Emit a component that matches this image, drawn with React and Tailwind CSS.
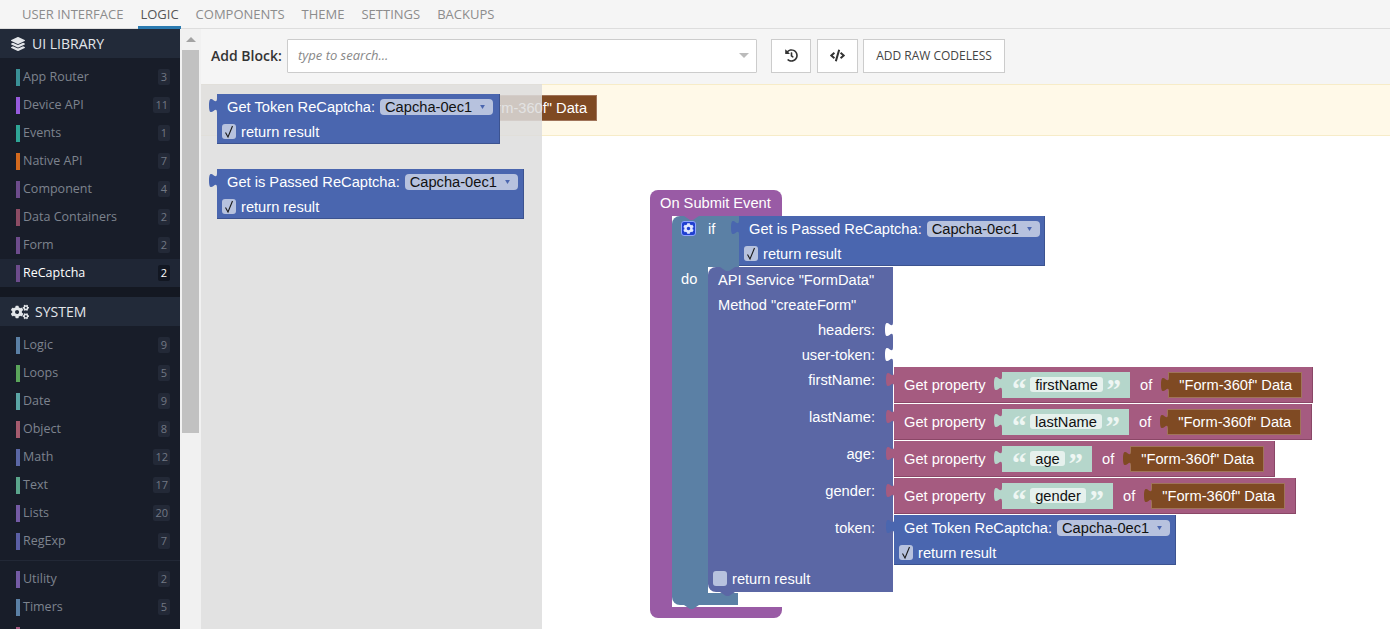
import React from "react";
import { FaLayerGroup, FaCogs, FaHistory, FaCode, FaCog } from "react-icons/fa";

const tabs = ["USER INTERFACE", "LOGIC", "COMPONENTS", "THEME", "SETTINGS", "BACKUPS"];

const library = [
  { name: "App Router", count: 3, bar: "bg-[#3a9096]" },
  { name: "Device API", count: 11, bar: "bg-[#965bdc]" },
  { name: "Events", count: 1, bar: "bg-[#2fa596]" },
  { name: "Native API", count: 7, bar: "bg-[#d2691e]" },
  { name: "Component", count: 4, bar: "bg-[#6d4c8c]" },
  { name: "Data Containers", count: 2, bar: "bg-[#8c4c64]" },
  { name: "Form", count: 2, bar: "bg-[#6d4c8c]" },
];

const system = [
  { name: "Logic", count: 9, bar: "bg-[#5b80a5]" },
  { name: "Loops", count: 5, bar: "bg-[#5ba55b]" },
  { name: "Date", count: 9, bar: "bg-[#5ba5a5]" },
  { name: "Object", count: 8, bar: "bg-[#a55b6e]" },
  { name: "Math", count: 12, bar: "bg-[#5b67a5]" },
  { name: "Text", count: 17, bar: "bg-[#5ba58c]" },
  { name: "Lists", count: 20, bar: "bg-[#745ba5]" },
  { name: "RegExp", count: 7, bar: "bg-[#5b5fa5]" },
];

const extras = [
  { name: "Utility", count: 2, bar: "bg-[#745ba5]" },
  { name: "Timers", count: 5, bar: "bg-[#5b80a5]" },
];

const SideRow = ({ name, count, bar, active }) => (
  <div className={`flex h-[28px] items-center pl-[16px] pr-[10px] ${active ? "bg-[#1f2635]" : ""}`}>
    <span className={`h-[17px] w-[4px] shrink-0 ${bar}`} />
    <span className={`ml-[3px] flex-1 text-[12.5px] ${active ? "text-white" : "text-[#7d838e]"}`}>{name}</span>
    <span
      className={`flex h-[16px] min-w-[12px] items-center justify-center rounded-[2px] px-[2px] text-[11px] ${
        active ? "bg-[#121722] text-white" : "bg-[#232937] text-[#727884]"
      }`}
    >
      {count}
    </span>
  </div>
);

const SideHeader = ({ icon, label }) => (
  <div className="flex h-[29px] items-center bg-[#222a39] pl-[11px] text-[14px] text-[#e3e6ea]">
    {icon}
    <span>{label}</span>
  </div>
);

// blockly puzzle tab, sticks out on the left of a block
const Tab = ({ className }) => (
  <svg viewBox="0 0 8 15" className={`absolute left-[-8px] h-[15px] w-[8px] ${className}`}>
    <path d="M8 0c0 10-8-8-8 7.500s8-2.500 8 7.500z" fill="currentColor" />
  </svg>
);

const Check = ({ on = true }) => (
  <span className="flex h-[15px] w-[14px] shrink-0 items-center justify-center rounded-[3px] bg-[#b7c2de]">
    {on && (
      <svg viewBox="0 0 14 15" className="h-[15px] w-[14px]">
        <path d="M3.500 8.500l2.500 4.500 4.500-11" fill="none" stroke="#1a1a1a" strokeWidth="1.100" />
      </svg>
    )}
  </span>
);

const Dropdown = () => (
  <span className="ml-[5px] flex h-[16px] items-center rounded-[4px] bg-[#b7c2de] pl-[5px] pr-[8px] text-[14.67px] text-[#111]">
    Capcha-0ec1
    <svg viewBox="0 0 6 5" className="ml-[8px] h-[4px] w-[5px]">
      <path d="M0 0h6L3 5z" fill="#4a66af" />
    </svg>
  </span>
);

const ReCaptchaBlock = ({ label, className = "" }) => (
  <div className={`relative h-[50px] shrink-0 border-b border-r border-[#3c5390] bg-[#4a66af] text-white ${className}`}>
    <Tab className="top-[4px] text-[#4a66af]" />
    <div className="flex h-[25px] items-center whitespace-nowrap pl-[10px] pr-[6px]">
      {label}
      <Dropdown />
    </div>
    <div className="flex h-[25px] items-center pl-[5px]">
      <Check />
      <span className="ml-[5px]">return result</span>
    </div>
  </div>
);

const FormData = ({ className = "" }) => (
  <div
    className={`relative flex h-[26px] w-[134px] shrink-0 items-center border border-[#a0745a] bg-[#7f4a23] pl-[10px] text-white ${className}`}
  >
    <Tab className="top-[4px] text-[#7f4a23]" />
    "Form-360f" Data
  </div>
);

const Quote = ({ children }) => (
  <span className="mt-[-3px] h-[17px] font-['Liberation_Serif',serif] text-[29px] font-bold leading-[29px] text-[#eef6f3]">
    {children}
  </span>
);

const GetProperty = ({ name, stringWidth, pillWidth }) => (
  <div className="relative flex h-[36px] shrink-0 items-center whitespace-nowrap border-b border-r border-[#8a4767] bg-[#a55b80] pl-[10px] pr-[10px] text-white">
    <Tab className="top-[5px] text-[#a55b80]" />
    <span className="w-[81px]">Get property</span>
    <div className={`relative ml-[17px] flex h-[26px] shrink-0 items-center justify-between bg-[#b5d6cb] pl-[10px] pr-[9px] ${stringWidth}`}>
      <Tab className="top-[4px] text-[#b5d6cb]" />
      <Quote>“</Quote>
      <span className={`flex h-[15px] items-center justify-center rounded-[3px] bg-[#e6f1ed] text-[14.67px] text-[#111] ${pillWidth}`}>
        {name}
      </span>
      <Quote>”</Quote>
    </div>
    <span className="ml-[10px]">of</span>
    <FormData className="ml-[16px]" />
  </div>
);

const ApiRow = ({ label, height, children }) => (
  <div className={`flex shrink-0 ${height}`}>
    <span className="flex h-[25px] w-[186px] shrink-0 items-center justify-end pr-[19px]">{label}</span>
    {children}
  </div>
);

const Socket = () => (
  <svg viewBox="0 0 8 15" className="ml-[-9px] mt-[5px] h-[15px] w-[8px] shrink-0 text-white">
    <path d="M8 0c0 10-8-8-8 7.500s8-2.500 8 7.500z" fill="currentColor" />
  </svg>
);

// small notch cut in the top of a block, filled with the colour of its parent
const Notch = ({ className }) => (
  <svg viewBox="0 0 15 4" className={`absolute h-[4px] w-[15px] ${className}`}>
    <path d="M0 0l6 4h3l6-4z" fill="currentColor" />
  </svg>
);

const SubmitEvent = () => (
  <div className="absolute left-[449px] top-[106px] font-['Liberation_Sans',sans-serif] text-[14.67px] text-white">
    <div className="flex h-[26px] w-[132px] items-center rounded-t-[8px] bg-[#995ba5] pl-[10px]">On Submit Event</div>
    <div className="flex">
      <div className="w-[22px] shrink-0 bg-[#995ba5]" />
      <div className="flex flex-col">
        <div className="flex h-[51px]">
          <div className="relative flex h-[51px] w-[67px] shrink-0 rounded-tl-[8px] bg-[#5b80a5] pl-[9px] pt-[5px]">
            <Notch className="left-[12px] top-0 text-[#995ba5]" />
            <span className="flex h-[15px] w-[15px] items-center justify-center rounded-[3px] border border-[#8fa5ff] bg-[#1f3fd0] text-[#dfe6ff]">
              <FaCog className="h-[11px] w-[11px]" />
            </span>
            <span className="ml-[12px] mt-[-3px]">if</span>
          </div>
          <ReCaptchaBlock label="Get is Passed ReCaptcha:" className="w-[306px]" />
        </div>
        <div className="flex h-[326px]">
          <div className="w-[36px] shrink-0 bg-[#5b80a5] pl-[9px] pt-[1px]">do</div>
          <div className="relative flex h-[325px] w-[185px] flex-col rounded-bl-[8px] rounded-tl-[8px] bg-[#5b67a5]">
            <Notch className="left-[12px] top-0 text-[#5b80a5]" />
            <div className="flex h-[25px] shrink-0 items-center pl-[10px]">API Service "FormData"</div>
            <div className="flex h-[25px] shrink-0 items-center pl-[10px]">Method "createForm"</div>
            <ApiRow label="headers:" height="h-[25px]">
              <Socket />
            </ApiRow>
            <ApiRow label="user-token:" height="h-[25px]">
              <Socket />
            </ApiRow>
            <ApiRow label="firstName:" height="h-[37px]">
              <GetProperty name="firstName" stringWidth="w-[128px]" pillWidth="w-[73px]" />
            </ApiRow>
            <ApiRow label="lastName:" height="h-[37px]">
              <GetProperty name="lastName" stringWidth="w-[127px]" pillWidth="w-[72px]" />
            </ApiRow>
            <ApiRow label="age:" height="h-[37px]">
              <GetProperty name="age" stringWidth="w-[90px]" pillWidth="w-[35px]" />
            </ApiRow>
            <ApiRow label="gender:" height="h-[37px]">
              <GetProperty name="gender" stringWidth="w-[111px]" pillWidth="w-[56px]" />
            </ApiRow>
            <ApiRow label="token:" height="h-[51px]">
              <ReCaptchaBlock label="Get Token ReCaptcha:" className="w-[282px]" />
            </ApiRow>
            <div className="flex h-[25px] shrink-0 items-center pl-[5px]">
              <Check on={false} />
              <span className="ml-[5px]">return result</span>
            </div>
            <Notch className="bottom-[-4px] left-[12px] z-10 text-[#5b67a5]" />
          </div>
        </div>
        <div className="relative h-[12px] w-[66px] rounded-bl-[8px] bg-[#5b80a5]">
          <Notch className="bottom-[-4px] left-[12px] text-[#5b80a5]" />
        </div>
        <div className="h-[2px]" />
      </div>
    </div>
    <div className="h-[11px] w-[132px] rounded-b-[8px] bg-[#995ba5]" />
  </div>
);

export default function App() {
  return (
    <div className="flex h-[629px] w-[1390px] flex-col overflow-hidden bg-white font-['Open_Sans',sans-serif]">
      {/* Top tabs */}
      <div className="flex h-[29px] shrink-0 gap-[13px] border-b border-[#ddd] bg-[#f5f5f5] pl-[20px] text-[13px]">
        {tabs.map((tab) => (
          <div
            key={tab}
            className={`flex h-[29px] items-center px-[2px] ${
              tab === "LOGIC" ? "border-b-[3px] border-[#2a7ab0] pt-[3px] text-[#555]" : "text-[#8c8c8c]"
            }`}
          >
            {tab}
          </div>
        ))}
      </div>

      <div className="flex min-h-0 flex-1">
        {/* Sidebar */}
        <div className="w-[180px] shrink-0 bg-[#181d29]">
          <SideHeader icon={<FaLayerGroup className="mr-[7px] h-[14px] w-[14px]" />} label="UI LIBRARY" />
          <div className="pt-[5px]">
            {library.map((item) => (
              <SideRow key={item.name} {...item} />
            ))}
            <SideRow name="ReCaptcha" count={2} bar="bg-[#6d4c8c]" active />
          </div>
          <div className="h-[10px] bg-[#141822]" />
          <SideHeader icon={<FaCogs className="mr-[6px] h-[18px] w-[18px]" />} label="SYSTEM" />
          <div className="pt-[5px]">
            {system.map((item) => (
              <SideRow key={item.name} {...item} />
            ))}
          </div>
          <div className="mt-[5px] border-t border-[#222836] pt-[4px]">
            {extras.map((item) => (
              <SideRow key={item.name} {...item} />
            ))}
            <div className="pl-[16px] pt-[6px]">
              <span className="block h-[17px] w-[4px] bg-[#a55b80]" />
            </div>
          </div>
        </div>

        {/* Scrollbar */}
        <div className="flex w-[21px] shrink-0 flex-col bg-[#f1f1f1] pl-[2px] pr-[2px]">
          <div className="flex h-[21px] items-center justify-center">
            <svg viewBox="0 0 10 5" className="h-[5px] w-[10px]">
              <path d="M5 0l5 5H0z" fill="#a3a3a3" />
            </svg>
          </div>
          <div className="h-[383px] bg-[#c1c1c1]" />
        </div>

        {/* Workspace */}
        <div className="flex min-w-0 flex-1 flex-col">
          <div className="flex h-[55px] shrink-0 items-center bg-[#f5f5f5] pb-[2px] pl-[10px] text-[#333]">
            <span className="w-[76px] text-[14px] font-semibold">Add Block:</span>
            <div className="flex h-[34px] w-[470px] items-center justify-between rounded-[1px] border border-[#ccc] bg-white pl-[10px] pr-[7px]">
              <span className="text-[13px] italic text-[#888]">type to search...</span>
              <svg viewBox="0 0 10 5" className="h-[5px] w-[10px]">
                <path d="M0 0h10L5 5z" fill="#bbb" />
              </svg>
            </div>
            <button className="ml-[14px] flex h-[34px] w-[40px] items-center justify-center border border-[#ccc] bg-white text-[#333]">
              <FaHistory className="h-[13px] w-[13px]" />
            </button>
            <button className="ml-[6px] flex h-[34px] w-[41px] items-center justify-center border border-[#ccc] bg-white text-[#333]">
              <FaCode className="h-[15px] w-[15px]" />
            </button>
            <button className="ml-[5px] flex h-[34px] w-[142px] items-center justify-center border border-[#ccc] bg-white text-[12px] text-[#444]">
              ADD RAW CODELESS
            </button>
          </div>

          <div className="relative min-h-0 flex-1 overflow-hidden bg-white font-['Liberation_Sans',sans-serif] text-[14.67px]">
            <div className="h-[52px] border-y border-[#f7ecc8] bg-[#fff9e8]" />
            <div className="absolute left-[262px] top-[11px]">
              <FormData />
            </div>
            <SubmitEvent />

            {/* Flyout */}
            <div className="absolute bottom-0 left-0 top-0 flex w-[341px] flex-col items-start bg-[#dddddd]/85 pl-[16px] pt-[10px]">
              <ReCaptchaBlock label="Get Token ReCaptcha:" className="w-[283px]" />
              <ReCaptchaBlock label="Get is Passed ReCaptcha:" className="mt-[25px] w-[307px]" />
            </div>
          </div>
        </div>
      </div>
    </div>
  );
}
